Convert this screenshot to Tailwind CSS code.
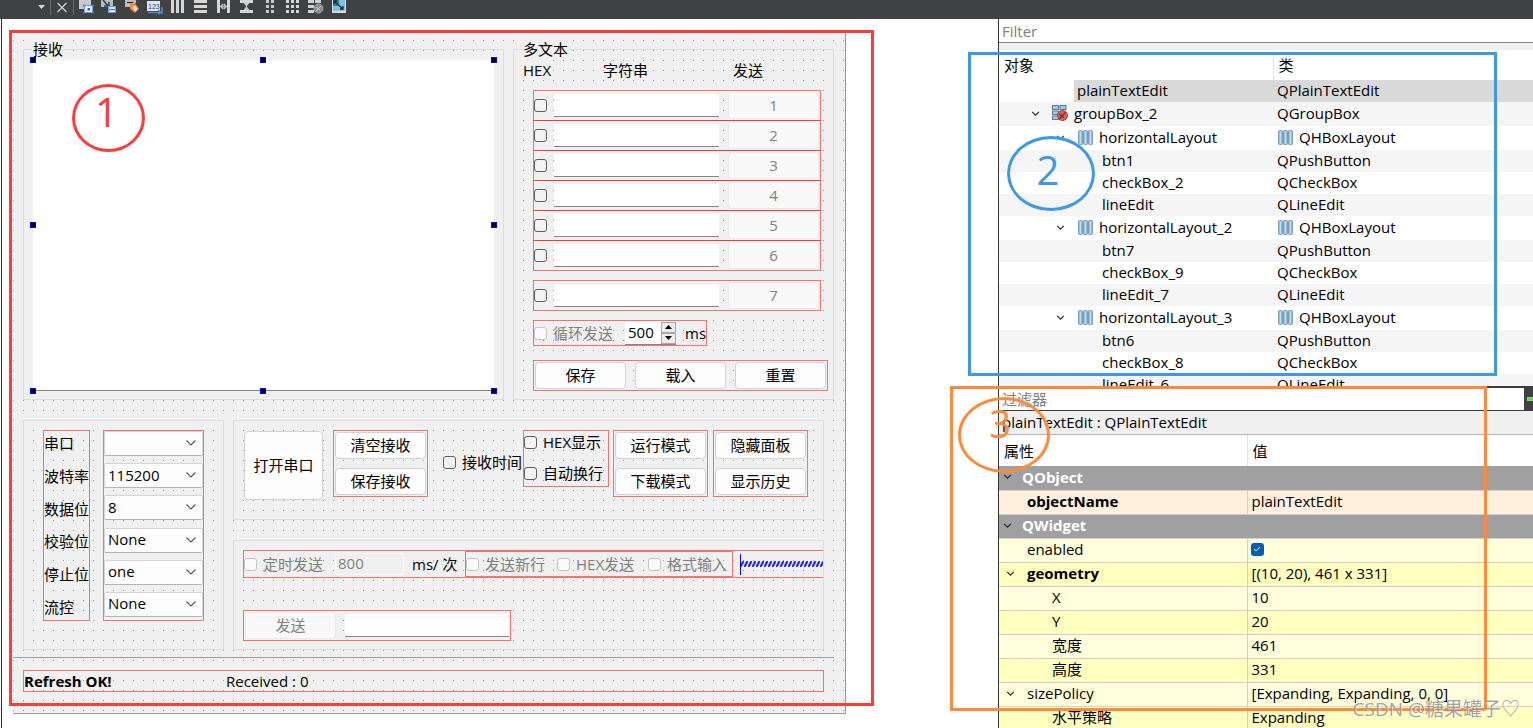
<!DOCTYPE html>
<html lang="zh-CN">
<head>
<meta charset="utf-8">
<title>Qt Designer</title>
<script src="https://cdn.jsdelivr.net/npm/@tailwindcss/browser@4"></script>
</head>
<body class="relative flex h-screen w-full flex-col overflow-hidden bg-white font-['Open_Sans','Noto_Sans_CJK_SC',sans-serif] text-[15px] leading-5 text-black">

<svg class="absolute size-0" aria-hidden="true">
  <defs>
    <linearGradient id="bar" x1="0" x2="1"><stop offset="0" stop-color="#7fa6c6"/><stop offset=".5" stop-color="#b9e0f2"/><stop offset="1" stop-color="#7f9ab6"/></linearGradient>
    <symbol id="hbox" viewBox="0 0 15 15">
      <rect x="0.5" y="0.5" width="4" height="14" rx="1" fill="url(#bar)" stroke="#7f9cb8"/>
      <rect x="5.5" y="0.5" width="4" height="14" rx="1" fill="url(#bar)" stroke="#7f9cb8"/>
      <rect x="10.5" y="0.5" width="4" height="14" rx="1" fill="url(#bar)" stroke="#7f9cb8"/>
    </symbol>
    <symbol id="broken" viewBox="0 0 16 16">
      <g fill="#9ecbe6" stroke="#5d7a9a"><rect x=".5" y=".5" width="6" height="4"/><rect x="8" y=".5" width="6" height="4"/><rect x=".5" y="6" width="6" height="3.500"/><rect x=".5" y="11" width="6" height="3.500"/></g>
      <circle cx="10.500" cy="10.500" r="5" fill="#d2645c" stroke="#a33a34"/><path d="M7.500 13.500 13.500 7.500M7.500 9 12 13" stroke="#7d2622" stroke-width="1.200"/>
    </symbol>
    <symbol id="open" viewBox="0 0 10 6"><path d="M1 1 5 5 9 1" fill="none" stroke="#222" stroke-width="1.300"/></symbol>
    <symbol id="drop" viewBox="0 0 10 6"><path d="M.5.5 5 5 9.500.5" fill="none" stroke="#555" stroke-width="1.100"/></symbol>
  </defs>
</svg>

<!-- Toolbar -->
<header class="flex h-[19px] shrink-0 items-start bg-[#404142]">
  <button aria-label="更多" class="ml-[37px] h-4 w-[9px]"><svg class="block" width="9" height="16"><path d="M1 5H8L4.500 9Z" fill="#d6d6d6"/></svg></button>
  <span class="ml-1 h-[15px] w-px bg-[#6a6b6c]"></span>
  <button aria-label="关闭" class="ml-[5px] h-4 w-3"><svg class="block" width="12" height="16"><path d="M1.500 3 10.500 12M10.500 3 1.500 12" stroke="#d0d0d0" stroke-width="1.200"/></svg></button>
  <span class="ml-[5px] h-[15px] w-px bg-[#6a6b6c]"></span>
  <div class="ml-1 flex gap-[7px]">
    <button aria-label="编辑控件"><svg class="block" width="16" height="16"><rect x="1" y="0" width="12" height="9" fill="#c8c9ca"/><rect x="6.500" y="5.500" width="8" height="7" fill="#e4effd" stroke="#6c9ce4"/><rect x="9.500" y="8" width="2.500" height="2.500" fill="#2b62b8"/><path d="M5 5.500H7M14 5.500H16M5 12.500H7M14 12.500H16" stroke="#4f7fd0" stroke-width="2"/></svg></button>
    <button aria-label="编辑信号/槽"><svg class="block" width="16" height="16"><rect x="0" y="0" width="12" height="7" fill="#b9bcc0"/><path d="M2 0 7 6M8 2V6H3" stroke="#24455f" stroke-width="1.600" fill="none"/><rect x="7.500" y="6.500" width="7" height="6" fill="#d4e4fb" stroke="#6c9ce4"/><path d="M8 9.500H14" stroke="#4d78b8"/></svg></button>
    <button aria-label="编辑伙伴"><svg class="block" width="16" height="16"><path d="M1 0H12V3H6V7H1Z" fill="#b9bcc0"/><path d="M3 2.500H9" stroke="#222"/><path d="M6 3H11L15 9 11 13 6 9Z" fill="#f08b4a"/><path d="M8 7 11 5 14 9 11 12Z" fill="#fff4ea" stroke="#f08b4a"/></svg></button>
    <button aria-label="编辑 Tab 顺序"><svg class="block" width="16" height="16"><rect x="0" y="1" width="13" height="10" fill="#dbe6f3"/><text x="1" y="9" font-size="7" font-family="Liberation Sans" fill="#1d4c8c">123</text><path d="M1 12.500H13M11 10 14 12.500 11 14M15 7V14" stroke="#4f8ad6" stroke-width="1.500" fill="none"/></svg></button>
    <button aria-label="水平布局"><svg class="block" width="16" height="16" fill="#d6d6d6"><path d="M1 0H4V13H1ZM6 0H9V13H6ZM11 0H14V13H11Z"/></svg></button>
    <button aria-label="垂直布局"><svg class="block" width="16" height="16" fill="#d6d6d6"><path d="M1 0H14V3H1ZM1 5H14V8H1ZM1 10H14V13H1Z"/></svg></button>
    <button aria-label="水平分裂器"><svg class="block" width="16" height="16"><path d="M1 0H4V13H1ZM11 0H14V13H11Z" fill="#d6d6d6"/><path d="M4 6.500H11M7 4 5 6.500 7 9M8 4 10 6.500 8 9" stroke="#bbb" stroke-width="1.500" fill="none"/></svg></button>
    <button aria-label="垂直分裂器"><svg class="block" width="16" height="16"><path d="M1 0H14V3H1ZM1 10H14V13H1Z" fill="#d6d6d6"/><path d="M7.500 3V10M5 3 7.500 6 10 3M5 10 7.500 7 10 10" stroke="#ccc" fill="#ccc"/></svg></button>
    <button aria-label="表单布局"><svg class="block" width="16" height="16" fill="#c8c8c8"><path d="M4 0H7V3H4ZM9 0H12V3H9ZM4 5H7V8H4ZM9 5H12V8H9ZM4 10H7V13H4ZM9 10H12V13H9Z"/></svg></button>
    <button aria-label="栅格布局"><svg class="block" width="16" height="16" fill="#d6d6d6"><path d="M1 0H4V3H1ZM6 0H9V3H6ZM11 0H14V3H11ZM1 5H4V8H1ZM6 5H9V8H6ZM11 5H14V8H11ZM1 10H4V13H1ZM6 10H9V13H6ZM11 10H14V13H11Z"/></svg></button>
    <button aria-label="打破布局"><svg class="block" width="16" height="16"><path d="M0 0H6V3H0ZM7 0H13V3H7ZM0 5H6V8H0ZM0 10H6V13H0Z" fill="#d0d0d0"/><circle cx="10.500" cy="8.500" r="4.500" fill="#8a8a8a" stroke="#a8a8a8"/><path d="M8 11 13 6M8 7 12 10" stroke="#ccc"/></svg></button>
    <button aria-label="调整大小"><svg class="block" width="16" height="16"><rect x="1" y="0" width="14" height="13" fill="#d5dde2"/><rect x="2" y="0" width="12" height="11" fill="#7cc0dc"/><path d="M2 0H8V6H2Z" fill="#2f7f9f"/><path d="M3 1 12 9M3 4V1H6M12 6V9H9" stroke="#0d2f42" stroke-width="1.300" fill="none"/></svg></button>
  </div>
</header>

<main class="flex min-h-0 flex-1 pl-px">

  <!-- Form being edited -->
  <section class="min-w-0 flex-1 border-l border-[#2d2e2f] bg-white pl-[11px] pt-[11px]">
    <form class="flex h-[684px] w-[833px] flex-col border-b border-r border-[#999] bg-[conic-gradient(from_270deg_at_1px_1px,#999_90deg,#f0f0f0_0)] bg-[length:10px_10px] pl-[10px] pt-[10px]">

      <div class="flex gap-[9px]">
        <fieldset class="h-[360px] w-[481px] border border-[#dcdcdc]">
          <legend class="ml-2 h-[19px] bg-[#f0f0f0] px-px leading-[18px]">接收</legend>
          <div class="relative ml-[9px] mt-px h-[331px] w-[461px]">
            <textarea aria-label="接收" class="block size-full resize-none border-b border-[#858585] bg-white outline-none"></textarea>
            <i class="absolute -left-[3px] -top-[3px] size-1.5 border border-[#00f] bg-black"></i>
            <i class="absolute left-[227px] -top-[3px] size-1.5 border border-[#00f] bg-black"></i>
            <i class="absolute -right-[3px] -top-[3px] size-1.5 border border-[#00f] bg-black"></i>
            <i class="absolute -left-[3px] top-[162px] size-1.5 border border-[#00f] bg-black"></i>
            <i class="absolute -right-[3px] top-[162px] size-1.5 border border-[#00f] bg-black"></i>
            <i class="absolute -left-[3px] -bottom-[3px] size-1.5 border border-[#00f] bg-black"></i>
            <i class="absolute left-[227px] -bottom-[3px] size-1.5 border border-[#00f] bg-black"></i>
            <i class="absolute -right-[3px] -bottom-[3px] size-1.5 border border-[#00f] bg-black"></i>
          </div>
        </fieldset>

        <fieldset class="h-[360px] w-[321px] border border-[#dcdcdc]">
          <legend class="ml-2 h-[19px] bg-[#f0f0f0] px-px leading-[18px]">多文本</legend>
          <div class="mt-px flex h-[30px] pl-[9px]">
            <span class="w-20"><span class="bg-[#f0f0f0]">HEX</span></span><span class="w-[130px]">字符串</span><span>发送</span>
          </div>
          <div class="ml-[19px] flex w-[288px] flex-col">
            <div class="flex h-[31px] items-center border border-[#f87171]">
              <input type="checkbox" aria-label="HEX 1" class="size-[13px] appearance-none rounded-[3px] border border-[#606060] bg-[#f3f3f3]">
              <input type="text" aria-label="字符串 1" class="ml-[7px] h-[23px] w-[165px] border-b border-[#858585] bg-white px-1 outline-none">
              <button type="button" disabled class="ml-[9px] h-[27px] w-[91px] rounded-[4px] border border-[#ebebeb] bg-[#f9f9f9] pb-0.5 text-[#808080]">1</button>
            </div>
            <div class="-mt-px flex h-[31px] items-center border border-[#f87171] border-t-[#f23c3c]">
              <input type="checkbox" aria-label="HEX 2" class="size-[13px] appearance-none rounded-[3px] border border-[#606060] bg-[#f3f3f3]">
              <input type="text" aria-label="字符串 2" class="ml-[7px] h-[23px] w-[165px] border-b border-[#858585] bg-white px-1 outline-none">
              <button type="button" disabled class="ml-[9px] h-[27px] w-[91px] rounded-[4px] border border-[#ebebeb] bg-[#f9f9f9] pb-0.5 text-[#808080]">2</button>
            </div>
            <div class="-mt-px flex h-[31px] items-center border border-[#f87171] border-t-[#f23c3c]">
              <input type="checkbox" aria-label="HEX 3" class="size-[13px] appearance-none rounded-[3px] border border-[#606060] bg-[#f3f3f3]">
              <input type="text" aria-label="字符串 3" class="ml-[7px] h-[23px] w-[165px] border-b border-[#858585] bg-white px-1 outline-none">
              <button type="button" disabled class="ml-[9px] h-[27px] w-[91px] rounded-[4px] border border-[#ebebeb] bg-[#f9f9f9] pb-0.5 text-[#808080]">3</button>
            </div>
            <div class="-mt-px flex h-[31px] items-center border border-[#f87171] border-t-[#f23c3c]">
              <input type="checkbox" aria-label="HEX 4" class="size-[13px] appearance-none rounded-[3px] border border-[#606060] bg-[#f3f3f3]">
              <input type="text" aria-label="字符串 4" class="ml-[7px] h-[23px] w-[165px] border-b border-[#858585] bg-white px-1 outline-none">
              <button type="button" disabled class="ml-[9px] h-[27px] w-[91px] rounded-[4px] border border-[#ebebeb] bg-[#f9f9f9] pb-0.5 text-[#808080]">4</button>
            </div>
            <div class="-mt-px flex h-[31px] items-center border border-[#f87171] border-t-[#f23c3c]">
              <input type="checkbox" aria-label="HEX 5" class="size-[13px] appearance-none rounded-[3px] border border-[#606060] bg-[#f3f3f3]">
              <input type="text" aria-label="字符串 5" class="ml-[7px] h-[23px] w-[165px] border-b border-[#858585] bg-white px-1 outline-none">
              <button type="button" disabled class="ml-[9px] h-[27px] w-[91px] rounded-[4px] border border-[#ebebeb] bg-[#f9f9f9] pb-0.5 text-[#808080]">5</button>
            </div>
            <div class="-mt-px flex h-[31px] items-center border border-[#f87171] border-t-[#f23c3c]">
              <input type="checkbox" aria-label="HEX 6" class="size-[13px] appearance-none rounded-[3px] border border-[#606060] bg-[#f3f3f3]">
              <input type="text" aria-label="字符串 6" class="ml-[7px] h-[23px] w-[165px] border-b border-[#858585] bg-white px-1 outline-none">
              <button type="button" disabled class="ml-[9px] h-[27px] w-[91px] rounded-[4px] border border-[#ebebeb] bg-[#f9f9f9] pb-0.5 text-[#808080]">6</button>
            </div>
            <div class="mt-[9px] flex h-[31px] items-center border border-[#f87171]">
              <input type="checkbox" aria-label="HEX 7" class="size-[13px] appearance-none rounded-[3px] border border-[#606060] bg-[#f3f3f3]">
              <input type="text" aria-label="字符串 7" class="ml-[7px] h-[23px] w-[165px] border-b border-[#858585] bg-white px-1 outline-none">
              <button type="button" disabled class="ml-[9px] h-[27px] w-[91px] rounded-[4px] border border-[#ebebeb] bg-[#f9f9f9] pb-0.5 text-[#808080]">7</button>
            </div>
          </div>
          <div class="ml-[19px] mt-[9px] flex h-[26px] w-[174px] items-center border border-[#f87171]">
            <input id="loop" type="checkbox" disabled class="size-[13px] shrink-0 appearance-none rounded-[3px] border border-[#c4c4c4] bg-[#fafafa]">
            <label for="loop" class="ml-1.5 w-[72px] shrink-0 text-[#808080]">循环发送</label>
            <input type="text" aria-label="间隔" value="500" class="h-[23px] w-9 shrink-0 border-b border-[#858585] bg-white pb-0.5 pl-[3px] outline-none">
            <span class="flex h-[23px] w-[15px] shrink-0 flex-col border-b border-[#858585] bg-white">
              <button type="button" aria-label="增加" class="flex h-[11px] items-center justify-center border border-[#aaa] bg-[#ececec]"><svg width="7" height="4"><path d="M0 4H7L3.500 0Z"/></svg></button>
              <button type="button" aria-label="减少" class="flex h-[11px] items-center justify-center border border-[#aaa] bg-[#ececec]"><svg width="7" height="4"><path d="M0 0H7L3.500 4Z"/></svg></button>
            </span>
            <span class="ml-[9px]">ms</span>
          </div>
          <div class="ml-[19px] mt-[14px] flex h-[31px] w-[295px] items-center gap-[9px] border border-[#f87171] px-px">
            <button type="button" class="h-[27px] w-[91px] rounded-[4px] border border-[#d2d2d2] bg-[#fdfdfd] pb-0.5">保存</button>
            <button type="button" class="h-[27px] w-[91px] rounded-[4px] border border-[#d2d2d2] bg-[#fdfdfd] pb-0.5">载入</button>
            <button type="button" class="h-[27px] w-[91px] rounded-[4px] border border-[#d2d2d2] bg-[#fdfdfd] pb-0.5">重置</button>
          </div>
        </fieldset>
      </div>

      <div class="mt-5 flex gap-[9px]">
        <div class="flex h-[230px] w-[201px] items-start border border-[#dcdcdc] pl-[19px] pt-[9px]">
          <div class="flex h-[191px] w-[47px] flex-col justify-between whitespace-nowrap border border-[#f87171] pb-[3px] pt-0.5">
            <label for="port">串口</label><label for="baud">波特率</label><label for="data">数据位</label><label for="parity">校验位</label><label for="stop">停止位</label><label for="flow">流控</label>
          </div>
          <div class="ml-[13px] flex h-[191px] w-[101px] flex-col justify-between border border-[#f87171] pb-[3px]">
            <div class="relative"><select id="port" class="block h-[25px] w-full appearance-none rounded-[2px] border border-[#d4d4d4] border-b-[#b4b4b4] bg-[#fdfdfd] pb-0.5 pl-[3px]"><option></option></select><svg class="pointer-events-none absolute right-[7px] top-[9px] h-1.5 w-2.5"><use href="#drop"/></svg></div>
            <div class="relative"><select id="baud" class="block h-[25px] w-full appearance-none rounded-[2px] border border-[#d4d4d4] border-b-[#b4b4b4] bg-[#fdfdfd] pb-0.5 pl-[3px]"><option>115200</option></select><svg class="pointer-events-none absolute right-[7px] top-[9px] h-1.5 w-2.5"><use href="#drop"/></svg></div>
            <div class="relative"><select id="data" class="block h-[25px] w-full appearance-none rounded-[2px] border border-[#d4d4d4] border-b-[#b4b4b4] bg-[#fdfdfd] pb-0.5 pl-[3px]"><option>8</option></select><svg class="pointer-events-none absolute right-[7px] top-[9px] h-1.5 w-2.5"><use href="#drop"/></svg></div>
            <div class="relative"><select id="parity" class="block h-[25px] w-full appearance-none rounded-[2px] border border-[#d4d4d4] border-b-[#b4b4b4] bg-[#fdfdfd] pb-0.5 pl-[3px]"><option>None</option></select><svg class="pointer-events-none absolute right-[7px] top-[9px] h-1.5 w-2.5"><use href="#drop"/></svg></div>
            <div class="relative"><select id="stop" class="block h-[25px] w-full appearance-none rounded-[2px] border border-[#d4d4d4] border-b-[#b4b4b4] bg-[#fdfdfd] pb-0.5 pl-[3px]"><option>one</option></select><svg class="pointer-events-none absolute right-[7px] top-[9px] h-1.5 w-2.5"><use href="#drop"/></svg></div>
            <div class="relative"><select id="flow" class="block h-[25px] w-full appearance-none rounded-[2px] border border-[#d4d4d4] border-b-[#b4b4b4] bg-[#fdfdfd] pb-0.5 pl-[3px]"><option>None</option></select><svg class="pointer-events-none absolute right-[7px] top-[9px] h-1.5 w-2.5"><use href="#drop"/></svg></div>
          </div>
        </div>

        <div class="flex w-[591px] flex-col gap-5">
          <div class="flex h-[100px] items-start border border-[#dcdcdc] pl-2.5 pt-[9px]">
            <button type="button" class="mt-px h-[69px] w-[79px] rounded-[4px] border border-[#d2d2d2] bg-[#fdfdfd] pb-0.5">打开串口</button>
            <div class="ml-2.5 flex h-[67px] w-[95px] flex-col justify-between border border-[#f87171] p-px">
              <button type="button" class="h-[27px] rounded-[4px] border border-[#d2d2d2] bg-[#fdfdfd] pb-0.5">清空接收</button>
              <button type="button" class="h-[27px] rounded-[4px] border border-[#d2d2d2] bg-[#fdfdfd] pb-0.5">保存接收</button>
            </div>
            <div class="ml-[15px] mt-[22px] flex w-20 items-center whitespace-nowrap">
              <input id="time" type="checkbox" class="size-[13px] shrink-0 appearance-none rounded-[3px] border border-[#606060] bg-[#f3f3f3]"><label for="time" class="ml-1.5">接收时间</label>
            </div>
            <div class="flex h-[57px] w-[86px] flex-col justify-between whitespace-nowrap border border-[#f87171] pb-[3px] pt-px">
              <div class="flex items-center"><input id="hexshow" type="checkbox" class="size-[13px] shrink-0 appearance-none rounded-[3px] border border-[#606060] bg-[#f3f3f3]"><label for="hexshow" class="ml-1.5">HEX显示</label></div>
              <div class="flex items-center"><input id="wrap" type="checkbox" class="size-[13px] shrink-0 appearance-none rounded-[3px] border border-[#606060] bg-[#f3f3f3]"><label for="wrap" class="ml-1.5">自动换行</label></div>
            </div>
            <div class="ml-1 flex h-[67px] w-[95px] flex-col justify-between border border-[#f87171] p-px">
              <button type="button" class="h-[27px] rounded-[4px] border border-[#d2d2d2] bg-[#fdfdfd] pb-0.5">运行模式</button>
              <button type="button" class="h-[27px] rounded-[4px] border border-[#d2d2d2] bg-[#fdfdfd] pb-0.5">下载模式</button>
            </div>
            <div class="ml-[5px] flex h-[67px] w-[95px] flex-col justify-between border border-[#f87171] p-px">
              <button type="button" class="h-[27px] rounded-[4px] border border-[#d2d2d2] bg-[#fdfdfd] pb-0.5">隐藏面板</button>
              <button type="button" class="h-[27px] rounded-[4px] border border-[#d2d2d2] bg-[#fdfdfd] pb-0.5">显示历史</button>
            </div>
          </div>

          <div class="h-[110px] border border-[#dcdcdc] pl-[9px] pt-[9px]">
            <div class="flex h-7 items-center whitespace-nowrap border-y border-l border-[#f87171]">
              <input id="timer" type="checkbox" disabled class="size-[13px] shrink-0 appearance-none rounded-[3px] border border-[#c4c4c4] bg-[#fafafa]">
              <label for="timer" class="ml-1.5 w-[72px] shrink-0 text-[#808080]">定时发送</label>
              <input type="text" disabled aria-label="周期" value="800" class="h-[22px] w-[69px] shrink-0 border border-[#f8f8f8] bg-[#f0f0f0] pb-0.5 pl-0.5 text-[#808080]">
              <span class="ml-2 w-[53px] shrink-0">ms/ 次</span>
              <div class="flex h-[26px] w-[268px] shrink-0 items-center border border-[#f87171] text-[#808080]">
                <input id="newline" type="checkbox" disabled class="size-[13px] shrink-0 appearance-none rounded-[3px] border border-[#c4c4c4] bg-[#fafafa]"><label for="newline" class="ml-1.5 w-[72px]">发送新行</label>
                <input id="hexsend" type="checkbox" disabled class="size-[13px] shrink-0 appearance-none rounded-[3px] border border-[#c4c4c4] bg-[#fafafa]"><label for="hexsend" class="ml-1.5 w-[72px]">HEX发送</label>
                <input id="format" type="checkbox" disabled class="size-[13px] shrink-0 appearance-none rounded-[3px] border border-[#c4c4c4] bg-[#fafafa]"><label for="format" class="ml-1.5">格式输入</label>
              </div>
              <svg class="ml-[7px] h-[21px] min-w-0 flex-1" aria-hidden="true"><defs><pattern id="spring" width="4" height="6" y="7" patternUnits="userSpaceOnUse"><path d="M0 6H1V4H2V2H3V0H4" fill="none" stroke="#00f" stroke-width="1.300"/></pattern></defs><rect width="1" height="21" fill="#00f"/><rect x="1" y="7" width="100%" height="6" fill="url(#spring)"/></svg>
            </div>
            <div class="mt-8 flex h-[31px] w-[268px] items-center border border-[#f87171] pl-px">
              <button type="button" disabled class="h-[27px] w-[91px] rounded-[4px] border border-[#ebebeb] bg-[#f9f9f9] pb-0.5 text-[#808080]">发送</button>
              <input type="text" aria-label="发送内容" class="ml-[9px] h-[23px] w-[164px] border-b border-[#858585] bg-white px-1 outline-none">
            </div>
          </div>
        </div>
      </div>

      <hr class="-ml-2.5 mt-[7px] w-[821px] border-0 border-t border-[#a0a0a0]">
      <div class="mt-3 flex h-[22px] w-[801px] items-center border border-[#f87171]">
        <strong class="w-[202px]">Refresh OK!</strong><span>Received : 0</span>
      </div>
    </form>
  </section>

  <!-- Inspector and properties -->
  <aside class="flex w-[535px] shrink-0 flex-col border-l border-[#333] bg-white">
    <input type="text" aria-label="Filter" placeholder="Filter" class="h-6 w-full shrink-0 border-b border-[#858585] bg-white pl-[3px] outline-none placeholder:text-[#808080]">
    <div class="h-[343px] shrink-0 overflow-hidden border-t-[7px] border-[#f0f0f0]">
      <table class="w-full table-fixed border-collapse">
        <thead>
          <tr class="h-[30px] text-left"><th class="w-[274px] border-r border-[#e5e5e5] pl-[5px] font-normal">对象</th><th class="pl-[5px] font-normal">类</th></tr>
        </thead>
        <tbody class="[&_td]:pb-0.5">
          <tr class="h-[22px] bg-[linear-gradient(90deg,#fff_75px,#d9d9d9_75px)]"><td class="pl-[78px]">plainTextEdit</td><td class="pl-1">QPlainTextEdit</td></tr>
          <tr class="h-6 bg-[#f5f5f5]"><td class="pl-8"><div class="flex items-center"><svg class="h-[5px] w-[9px]"><use href="#open"/></svg><svg class="ml-3 mr-1.5 size-4"><use href="#broken"/></svg>groupBox_2</div></td><td class="pl-1">QGroupBox</td></tr>
          <tr class="h-6"><td class="pl-[57px]"><div class="flex items-center"><svg class="h-[5px] w-[9px]"><use href="#open"/></svg><svg class="ml-[13px] mr-1.5 size-[15px]"><use href="#hbox"/></svg>horizontalLayout</div></td><td class="pl-[5px]"><div class="flex items-center"><svg class="mr-1.5 size-[15px]"><use href="#hbox"/></svg>QHBoxLayout</div></td></tr>
          <tr class="h-[22px] bg-[#f5f5f5]"><td class="pl-[103px]">btn1</td><td class="pl-1">QPushButton</td></tr>
          <tr class="h-[22px]"><td class="pl-[103px]">checkBox_2</td><td class="pl-1">QCheckBox</td></tr>
          <tr class="h-[22px] bg-[#f5f5f5]"><td class="pl-[103px]">lineEdit</td><td class="pl-1">QLineEdit</td></tr>
          <tr class="h-6"><td class="pl-[57px]"><div class="flex items-center"><svg class="h-[5px] w-[9px]"><use href="#open"/></svg><svg class="ml-[13px] mr-1.5 size-[15px]"><use href="#hbox"/></svg>horizontalLayout_2</div></td><td class="pl-[5px]"><div class="flex items-center"><svg class="mr-1.5 size-[15px]"><use href="#hbox"/></svg>QHBoxLayout</div></td></tr>
          <tr class="h-[22px] bg-[#f5f5f5]"><td class="pl-[103px]">btn7</td><td class="pl-1">QPushButton</td></tr>
          <tr class="h-[22px]"><td class="pl-[103px]">checkBox_9</td><td class="pl-1">QCheckBox</td></tr>
          <tr class="h-[22px] bg-[#f5f5f5]"><td class="pl-[103px]">lineEdit_7</td><td class="pl-1">QLineEdit</td></tr>
          <tr class="h-6"><td class="pl-[57px]"><div class="flex items-center"><svg class="h-[5px] w-[9px]"><use href="#open"/></svg><svg class="ml-[13px] mr-1.5 size-[15px]"><use href="#hbox"/></svg>horizontalLayout_3</div></td><td class="pl-[5px]"><div class="flex items-center"><svg class="mr-1.5 size-[15px]"><use href="#hbox"/></svg>QHBoxLayout</div></td></tr>
          <tr class="h-[22px] bg-[#f5f5f5]"><td class="pl-[103px]">btn6</td><td class="pl-1">QPushButton</td></tr>
          <tr class="h-[22px]"><td class="pl-[103px]">checkBox_8</td><td class="pl-1">QCheckBox</td></tr>
          <tr class="h-[22px] bg-[#f5f5f5]"><td class="pl-[103px]">lineEdit_6</td><td class="pl-1">QLineEdit</td></tr>
        </tbody>
      </table>
    </div>

    <div class="flex h-[25px] shrink-0 border-b border-t-2 border-[#3c3d3e] bg-[#404142]">
      <input type="text" aria-label="过滤器" placeholder="过滤器" class="min-w-0 flex-1 bg-white pl-[3px] outline-none placeholder:text-[#808080]">
      <button aria-label="添加动态属性" class="w-[9px] overflow-hidden"><svg class="block" width="9" height="22"><rect x="3.500" y="9.500" width="9" height="3" fill="#4fe23a" stroke="#7fdc72"/></svg></button>
    </div>
    <div class="flex h-6 shrink-0 items-center border-b border-[#b4b4b4] bg-[#f0f0f0] pb-0.5 pl-[3px]">plainTextEdit : QPlainTextEdit</div>
    <div class="min-h-0 flex-1 overflow-hidden">
      <table class="w-full table-fixed border-collapse">
        <thead>
          <tr class="h-[31px] text-left"><th class="w-[248px] border-r border-[#e5e5e5] pl-[5px] font-normal">属性</th><th class="pl-[5px] font-normal">值</th></tr>
        </thead>
        <tbody class="[&_td]:pb-0.5 [&_th]:pb-0.5">
          <tr class="h-6 border-b border-[#d0d0d0] bg-[#a0a0a0] text-white"><th colspan="2" class="pl-1 text-left font-bold"><div class="flex items-center"><svg class="mr-[10px] h-[5px] w-[9px]"><use href="#open"/></svg>QObject</div></th></tr>
          <tr class="h-6 border-b border-[#d0d0d0] bg-[#ffefdc]"><td class="border-r border-[#d0d0d0] pl-7 font-bold">objectName</td><td class="pl-1">plainTextEdit</td></tr>
          <tr class="h-6 border-b border-[#d0d0d0] bg-[#a0a0a0] text-white"><th colspan="2" class="pl-1 text-left font-bold"><div class="flex items-center"><svg class="mr-[10px] h-[5px] w-[9px]"><use href="#open"/></svg>QWidget</div></th></tr>
          <tr class="h-6 border-b border-[#d0d0d0] bg-[#ffffdc]"><td class="border-r border-[#d0d0d0] pl-7"><label for="enabled">enabled</label></td><td class="pl-[3px]"><div class="grid size-[13px] place-items-center"><input id="enabled" type="checkbox" checked class="col-start-1 row-start-1 size-[13px] appearance-none rounded-[3px] bg-[#005fb8]"><svg class="pointer-events-none col-start-1 row-start-1" width="8" height="6"><path d="M1 3 3 5 7 1" fill="none" stroke="#fff"/></svg></div></td></tr>
          <tr class="h-6 border-b border-[#d0d0d0] bg-[#ffffbf]"><td class="border-r border-[#d0d0d0] pl-[7px] font-bold"><div class="flex items-center"><svg class="mr-3 h-[5px] w-[9px]"><use href="#open"/></svg>geometry</div></td><td class="pl-1">[(10, 20), 461 x 331]</td></tr>
          <tr class="h-6 border-b border-[#d0d0d0] bg-[#ffffdc]"><td class="border-r border-[#d0d0d0] pl-[53px]">X</td><td class="pl-1">10</td></tr>
          <tr class="h-6 border-b border-[#d0d0d0] bg-[#ffffbf]"><td class="border-r border-[#d0d0d0] pl-[53px]">Y</td><td class="pl-1">20</td></tr>
          <tr class="h-6 border-b border-[#d0d0d0] bg-[#ffffdc]"><td class="border-r border-[#d0d0d0] pl-[53px]">宽度</td><td class="pl-1">461</td></tr>
          <tr class="h-6 border-b border-[#d0d0d0] bg-[#ffffbf]"><td class="border-r border-[#d0d0d0] pl-[53px]">高度</td><td class="pl-1">331</td></tr>
          <tr class="h-6 border-b border-[#d0d0d0] bg-[#ffffdc]"><td class="border-r border-[#d0d0d0] pl-[7px]"><div class="flex items-center"><svg class="mr-3 h-[5px] w-[9px]"><use href="#open"/></svg>sizePolicy</div></td><td class="pl-1">[Expanding, Expanding, 0, 0]</td></tr>
          <tr class="h-6 border-b border-[#d0d0d0] bg-[#ffffbf]"><td class="border-r border-[#d0d0d0] pl-[53px]">水平策略</td><td class="pl-1">Expanding</td></tr>
        </tbody>
      </table>
    </div>
  </aside>
</main>

<!-- Numbered callouts drawn over the window -->
<div class="pointer-events-none absolute left-[9px] top-[30px] h-[676px] w-[865px] border-[3px] border-[#ff3b3b]"></div>
<div class="pointer-events-none absolute left-[72px] top-[84px] flex h-[68px] w-[73px] justify-center rounded-[50%] border-[3px] border-[#ff3b3b] pr-1 text-[40px] leading-[50px] text-[#ff3b3b]">1</div>
<div class="pointer-events-none absolute left-[968px] top-[52px] h-[324px] w-[529px] border-[3px] border-[#3c98e8]"></div>
<div class="pointer-events-none absolute left-[1007px] top-[136px] flex h-[75px] w-[88px] justify-center rounded-[50%] border-[3px] border-[#3c98e8] pr-1.5 text-[40px] leading-[62px] text-[#3c98e8]">2</div>
<div class="pointer-events-none absolute left-[950px] top-[386px] h-[325px] w-[537px] border-[3px] border-[#ff8a3c]"></div>
<div class="pointer-events-none absolute left-[958px] top-[397px] flex h-[76px] w-[92px] justify-center rounded-[50%] border-[3px] border-[#ff8a3c] pr-2 text-[38px] leading-[46px] text-[#ff8a3c]">3</div>
<div class="pointer-events-none absolute bottom-[7px] right-[13px] whitespace-nowrap text-[19px] leading-6 text-[#8a8a8a]/80 [text-shadow:1px_1px_0_#ffffffb0]">CSDN @糖果罐子♡</div>
</body>
</html>
